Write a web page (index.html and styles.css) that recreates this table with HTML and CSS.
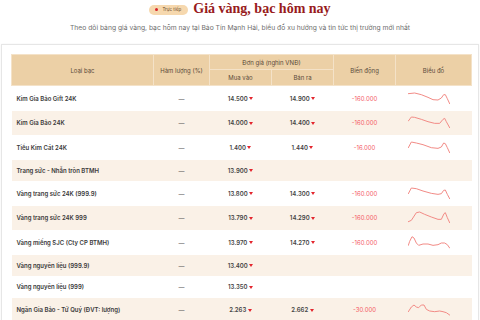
FILE: index.html
```html
<!DOCTYPE html>
<html lang="vi">
<head>
<meta charset="utf-8">
<title>Giá vàng, bạc hôm nay</title>
<link rel="stylesheet" href="styles.css">
</head>
<body>
<header class="hero">
  <div class="hero-title-row">
    <span class="live-badge"><span class="live-dot"></span>Trực tiếp</span>
    <h1 class="hero-title">Giá vàng, bạc hôm nay</h1>
  </div>
  <p class="hero-sub">Theo dõi bảng giá vàng, bạc hôm nay tại Bảo Tín Mạnh Hải, biểu đồ xu hướng và tin tức thị trường mới nhất</p>
</header>
<section class="card">
  <table class="price-table">
    <colgroup>
      <col class="c-name"><col class="c-purity"><col class="c-buy"><col class="c-sell"><col class="c-change"><col class="c-chart">
    </colgroup>
    <thead>
      <tr class="h1">
        <th rowspan="2">Loại bạc</th>
        <th rowspan="2">Hàm lượng (%)</th>
        <th colspan="2">Đơn giá (nghìn VNĐ)</th>
        <th rowspan="2">Biến động</th>
        <th rowspan="2">Biểu đồ</th>
      </tr>
      <tr class="h2">
        <th>Mua vào</th>
        <th>Bán ra</th>
      </tr>
    </thead>
    <tbody>
      <tr class="tall">
        <td class="name">Kim Gia Bảo Gift 24K</td>
        <td class="dash">—</td>
        <td class="num">14.500<span class="down"></span></td>
        <td class="num">14.900<span class="down"></span></td>
        <td class="chg">-160.000</td>
        <td class="spark"><svg viewBox="0 0 126 38" width="42" height="12.7"><polyline points="1,5 20,3 40,8 60,16 75,23 90,24 100,18 107,8 112,8 118,20 125,35"/></svg></td>
      </tr>
      <tr class="tall alt">
        <td class="name">Kim Gia Bảo 24K</td>
        <td class="dash">—</td>
        <td class="num">14.000<span class="down"></span></td>
        <td class="num">14.400<span class="down"></span></td>
        <td class="chg">-160.000</td>
        <td class="spark"><svg viewBox="0 0 126 38" width="42" height="12.7"><polyline points="1,15 10,3 20,4 40,10 60,17 80,22 95,22 105,10 110,7 115,17 125,35"/></svg></td>
      </tr>
      <tr class="tall">
        <td class="name">Tiểu Kim Cát 24K</td>
        <td class="dash">—</td>
        <td class="num">1.400<span class="down"></span></td>
        <td class="num">1.440<span class="down"></span></td>
        <td class="chg">-16.000</td>
        <td class="spark"><svg viewBox="0 0 126 38" width="42" height="12.7"><polyline points="1,20 10,3 25,6 45,11 70,20 90,22 100,18 107,6 112,8 118,20 125,35"/></svg></td>
      </tr>
      <tr class="short alt">
        <td class="name">Trang sức - Nhẫn tròn BTMH</td>
        <td class="dash">—</td>
        <td class="num">13.900<span class="down"></span></td>
        <td></td>
        <td></td>
        <td></td>
      </tr>
      <tr class="tall">
        <td class="name">Vàng trang sức 24K (999.9)</td>
        <td class="dash">—</td>
        <td class="num">13.800<span class="down"></span></td>
        <td class="num">14.300<span class="down"></span></td>
        <td class="chg">-160.000</td>
        <td class="spark"><svg viewBox="0 0 126 38" width="42" height="12.7"><polyline points="1,20 10,3 25,5 45,12 70,19 90,22 100,20 107,10 112,9 118,22 125,35"/></svg></td>
      </tr>
      <tr class="tall alt">
        <td class="name">Vàng trang sức 24K 999</td>
        <td class="dash">—</td>
        <td class="num">13.790<span class="down"></span></td>
        <td class="num">14.290<span class="down"></span></td>
        <td class="chg">-160.000</td>
        <td class="spark"><svg viewBox="0 0 126 38" width="42" height="12.7"><polyline points="1,32 10,28 25,5 35,3 50,10 70,18 90,25 100,25 108,8 112,5 118,20 125,35"/></svg></td>
      </tr>
      <tr class="tall">
        <td class="name">Vàng miếng SJC (Cty CP BTMH)</td>
        <td class="dash">—</td>
        <td class="num">13.970<span class="down"></span></td>
        <td class="num">14.270<span class="down"></span></td>
        <td class="chg">-160.000</td>
        <td class="spark"><svg viewBox="0 0 126 38" width="42" height="12.7"><polyline points="1,28 5,16 12,2 18,6 25,21 32,28 45,24 60,24 75,28 90,26 100,21 110,21 118,26 125,36"/></svg></td>
      </tr>
      <tr class="short alt">
        <td class="name">Vàng nguyên liệu (999.9)</td>
        <td class="dash">—</td>
        <td class="num">13.400<span class="down"></span></td>
        <td></td>
        <td></td>
        <td></td>
      </tr>
      <tr class="short">
        <td class="name">Vàng nguyên liệu (999)</td>
        <td class="dash">—</td>
        <td class="num">13.350<span class="down"></span></td>
        <td></td>
        <td></td>
        <td></td>
      </tr>
      <tr class="tall alt">
        <td class="name">Ngân Gia Bảo - Tứ Quý (ĐVT: lượng)</td>
        <td class="dash">—</td>
        <td class="num">2.263<span class="down"></span></td>
        <td class="num">2.662<span class="down"></span></td>
        <td class="chg">-30.000</td>
        <td class="spark"><svg viewBox="0 0 126 38" width="42" height="12.7"><polyline points="1,26 10,12 18,6 25,12 32,14 40,6 48,6 55,19 65,24 80,26 95,24 105,26 115,29 125,36"/></svg></td>
      </tr>
    </tbody>
  </table>
</section>
</body>
</html>
```

FILE: styles.css
```css
html, body {
  margin: 0;
  padding: 0;
  background: #ffffff;
}
body {
  width: 480px;
  height: 320px;
  overflow: hidden;
  font-family: Inter, "Noto Sans", "Liberation Sans", sans-serif;
  color: #333;
}
.hero {
  text-align: center;
}
.hero-title-row {
  display: flex;
  justify-content: center;
  align-items: center;
  gap: 5px;
  height: 18px;
}
.live-badge {
  display: inline-flex;
  align-items: center;
  gap: 4px;
  height: 10px;
  padding: 0 7px 0 6px;
  margin-top: 1px;
  border-radius: 5px;
  background: #f6d8ae;
  color: #6b4a2a;
  font-size: 4.5px;
  line-height: 10px;
}
.live-dot {
  width: 3px;
  height: 3px;
  border-radius: 50%;
  background: #d8232a;
}
.hero-title {
  margin: 0;
  font-family: "Liberation Serif", "DejaVu Serif", serif;
  font-weight: 700;
  font-size: 14px;
  line-height: 18px;
  color: #981b20;
}
.hero-sub {
  margin: 4.5px 0 0;
  font-size: 6.75px;
  line-height: 10px;
  color: #6f6f6f;
}
.card {
  margin: 11.5px 1px 0 1px;
  border: 1px solid #e6e6e6;
  border-bottom: none;
  padding: 9px 7px 0 9px;
  box-shadow: 0 0 2px rgba(0, 0, 0, 0.05);
}
.price-table {
  width: 460px;
  border-collapse: collapse;
  table-layout: fixed;
  font-size: 6px;
}
.c-name { width: 142px; }
.c-purity { width: 56px; }
.c-buy { width: 62px; }
.c-sell { width: 62px; }
.c-change { width: 62px; }
.c-chart { width: 76px; }
.price-table th {
  background: #ecd0a6;
  color: #5a4a3a;
  font-weight: 400;
  padding: 0;
  border: 1px solid #f4e2c8;
  text-align: center;
  vertical-align: middle;
}
.h1 th { height: 14px; }
.h2 th { height: 15px; }
.price-table td {
  padding: 0;
  text-align: center;
  vertical-align: middle;
}
.tall td { height: 24.5px; }
.short td { height: 21.5px; }
.alt td { background: #faf1e7; }
.name {
  text-align: left !important;
  padding-left: 5px !important;
  font-weight: 600;
  color: #3a3a3a;
}
.dash {
  color: #555;
}
.num {
  font-weight: 600;
  color: #444;
}
.down {
  display: inline-block;
  margin-left: 1.5px;
  width: 0;
  height: 0;
  border-left: 2px solid transparent;
  border-right: 2px solid transparent;
  border-top: 3.5px solid #e3252d;
  vertical-align: 0.3px;
}
.chg {
  color: #f4575f;
}
.spark {
  text-align: left !important;
  padding-left: 12px !important;
}
.spark svg {
  display: block;
}
.spark polyline {
  fill: none;
  stroke: #f28b86;
  stroke-width: 3;
  stroke-linejoin: round;
  stroke-linecap: round;
}
```
